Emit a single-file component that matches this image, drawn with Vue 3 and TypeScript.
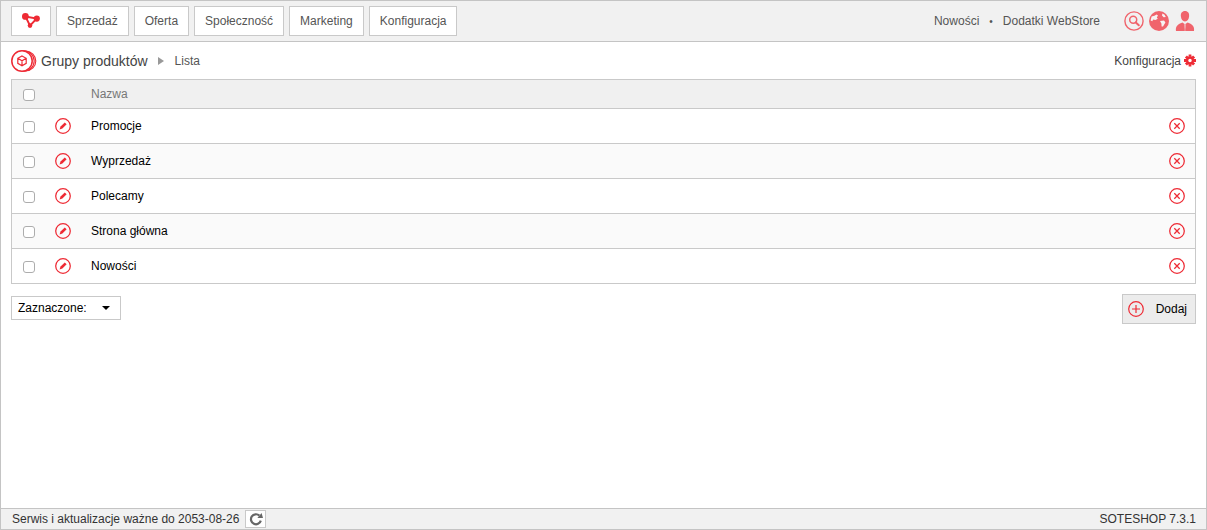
<script setup lang="ts">
const menu: string[] = ['Sprzedaż', 'Oferta', 'Społeczność', 'Marketing', 'Konfiguracja']
const rows: string[] = ['Promocje', 'Wyprzedaż', 'Polecamy', 'Strona główna', 'Nowości']
</script>

<template>
  <div class="page">
    <header class="topbar">
      <nav class="menu">
        <a class="btn logo">
          <svg width="18" height="15" viewBox="0 0 18 15">
            <path d="M3.4 3.4 L14.6 5.6 L8 12.6 Z" fill="none" stroke="#ee2a34" stroke-width="2" />
            <circle cx="3.4" cy="3.4" r="3.4" fill="#ee2a34" />
            <circle cx="14.8" cy="5.6" r="3.1" fill="#ee2a34" />
            <circle cx="8" cy="12.6" r="2.3" fill="#ee2a34" />
          </svg>
        </a>
        <a v-for="m in menu" :key="m" class="btn">{{ m }}</a>
      </nav>
      <div class="top-right">
        <span class="link">Nowości</span>
        <span class="dot">•</span>
        <span class="link">Dodatki WebStore</span>
        <span class="top-icons">
          <svg width="20" height="20" viewBox="0 0 20 20">
            <circle cx="10" cy="10" r="9.1" fill="none" stroke="#f0646c" stroke-width="1.4" />
            <circle cx="9.2" cy="8.8" r="3.5" fill="none" stroke="#f0646c" stroke-width="1.5" />
            <path d="M11.8 11.4 L14.8 14.2" stroke="#f0646c" stroke-width="2" stroke-linecap="round" />
          </svg>
          <svg width="20" height="20" viewBox="0 0 20 20">
            <circle cx="10" cy="10" r="10" fill="#f0646c" />
            <path d="M2.6 5.6 L5.4 4.8 L7.6 3.4 L9 4.6 L7.8 6.4 L8.8 7.8 L6.4 9 L4 8.6 L3.4 10.2 L1.6 9.4 Z" fill="#f7f3f3" />
            <path d="M13.4 2.4 L15.6 3.8 L16.8 6 L14.6 6.2 L13 4.6 Z M11 10 L15 9.4 L16.4 11.4 L14 15.4 L12.6 15.6 L12.4 12.6 Z" fill="#f7f3f3" />
          </svg>
          <svg class="person" width="20" height="20" viewBox="0 0 20 20">
            <path d="M10 0 C13 0 14.5 2.4 14.1 5.4 C13.8 8 12.4 10.4 10 10.4 C7.6 10.4 6.2 8 5.9 5.4 C5.5 2.4 7 0 10 0 Z" fill="#f0646c" />
            <path d="M1 20 C0.4 15.6 2 13.4 7.4 11.4 L9.6 13 L9 20 Z M19 20 C19.6 15.6 18 13.4 12.6 11.4 L10.4 13 L11 20 Z" fill="#f0646c" />
            <path d="M10 13.4 L9.2 18.4 H10.8 Z" fill="#f0646c" />
            <path d="M9.2 18.2 H10.8 V20 H9.2 Z" fill="#f0646c" />
          </svg>
        </span>
      </div>
    </header>

    <main class="content">
      <div class="crumbs">
        <div class="crumb-left">
          <svg class="crumb-icon" width="26" height="22" viewBox="0 0 26 22">
            <circle cx="15" cy="11" r="9.8" fill="none" stroke="#ee2a34" stroke-width="1.1" />
            <circle cx="13" cy="11" r="10.2" fill="#fff" stroke="#ee2a34" stroke-width="1.1" />
            <circle cx="11" cy="11" r="10.2" fill="#fff" stroke="#ee2a34" stroke-width="1.5" />
            <path d="M11 6 L15.2 8.3 V13.3 L11 15.8 L6.8 13.3 V8.3 Z M6.8 8.3 L11 10.7 L15.2 8.3 M11 10.7 V15.8" fill="none" stroke="#ee2a34" stroke-width="1.2" />
          </svg>
          <span class="title">Grupy produktów</span>
          <span class="arrow"></span>
          <span class="sub">Lista</span>
        </div>
        <div class="config">
          <span>Konfiguracja</span>
          <svg width="12" height="13" viewBox="0 0 13 14">
            <circle cx="6.5" cy="7" r="3.2" fill="none" stroke="#ee2a34" stroke-width="2.6" />
            <path d="M5 0.5 H8 V3 H5 Z M5 11 H8 V13.5 H5 Z M0 5.5 H2.5 V8.5 H0 Z M10.5 5.5 H13 V8.5 H10.5 Z M1 3.7 L3.2 1.5 L4.8 3.1 L2.6 5.3 Z M9.8 1.5 L12 3.7 L10.4 5.3 L8.2 3.1 Z M1 10.3 L2.6 8.7 L4.8 10.9 L3.2 12.5 Z M8.2 10.9 L10.4 8.7 L12 10.3 L9.8 12.5 Z" fill="#ee2a34" />
          </svg>
        </div>
      </div>

      <div class="table">
        <div class="row head">
          <span class="cell-check"><span class="check"></span></span>
          <span class="cell-edit"></span>
          <span class="cell-name">Nazwa</span>
        </div>
        <div v-for="(r, i) in rows" :key="r" class="row" :class="{ alt: i % 2 === 1 }">
          <span class="cell-check"><span class="check"></span></span>
          <span class="cell-edit">
            <svg width="16" height="16" viewBox="0 0 16 16">
              <circle cx="8" cy="8" r="7.3" fill="none" stroke="#ee2a34" stroke-width="1.25" />
              <path d="M4.6 11.4 L5.5 8.6 L9.8 4.4 L11.6 6.2 L7.4 10.5 Z" fill="#ee2a34" />
            </svg>
          </span>
          <span class="cell-name">{{ r }}</span>
          <span class="cell-del">
            <svg width="16" height="16" viewBox="0 0 16 16">
              <circle cx="8" cy="8" r="7.3" fill="none" stroke="#ee2a34" stroke-width="1.25" />
              <path d="M5.3 5.3 L10.7 10.7 M10.7 5.3 L5.3 10.7" stroke="#ee2a34" stroke-width="1.25" />
            </svg>
          </span>
        </div>
      </div>

      <div class="actions">
        <div class="select">
          <span>Zaznaczone:</span>
          <span class="caret"></span>
        </div>
        <a class="add">
          <svg width="16" height="16" viewBox="0 0 16 16">
            <circle cx="8" cy="8" r="7.3" fill="none" stroke="#ee2a34" stroke-width="1.2" />
            <path d="M8 4 V12 M4 8 H12" stroke="#ee2a34" stroke-width="1.2" />
          </svg>
          <span>Dodaj</span>
        </a>
      </div>
    </main>

    <footer class="footer">
      <div class="foot-left">
        <span>Serwis i aktualizacje ważne do 2053-08-26</span>
        <span class="refresh">
          <svg width="14" height="14" viewBox="0 0 14 14">
            <path d="M11.8 8.6 A5 5 0 1 1 10.4 3.6" fill="none" stroke="#666" stroke-width="2.2" />
            <path d="M8.4 6 H14 L12.6 1 Z" fill="#666" />
          </svg>
        </span>
      </div>
      <span>SOTESHOP 7.3.1</span>
    </footer>
  </div>
</template>

<style scoped>
.page {
  box-sizing: border-box;
  width: 1207px;
  height: 530px;
  display: flex;
  flex-direction: column;
  border: 1px solid #c4c4c4;
  border-bottom: 0;
  font-family: "Liberation Sans", Arial, sans-serif;
  font-size: 12px;
  color: #000;
  background: #fff;
  overflow: hidden;
}
.topbar {
  box-sizing: border-box;
  flex: none;
  height: 41px;
  display: flex;
  align-items: center;
  justify-content: space-between;
  padding: 0 10px;
  background: #f1f1f1;
  border-bottom: 1px solid #c4c4c4;
}
.menu {
  display: flex;
  gap: 5px;
  margin-top: -1px;
}
.btn {
  box-sizing: border-box;
  height: 30px;
  display: flex;
  align-items: center;
  padding: 0 10px;
  background: #fff;
  border: 1px solid #c9c9c9;
  color: #555;
}
.btn:last-child {
  padding-right: 9px;
}
.logo {
  width: 40px;
  justify-content: center;
  padding: 0;
}
.top-right {
  display: flex;
  align-items: center;
  color: #555;
}
.dot {
  margin: 0 10px;
  font-size: 10px;
}
.top-icons {
  display: flex;
  align-items: center;
  gap: 5px;
  margin-left: 24px;
  margin-right: 1px;
}
.person {
  margin-left: 1px;
}
.content {
  flex: 1;
  padding: 0 10px;
  min-height: 0;
}
.crumbs {
  height: 37px;
  display: flex;
  align-items: center;
  justify-content: space-between;
}
.crumb-left {
  display: flex;
  align-items: center;
}
.crumb-icon {
  margin-right: 4px;
}
.title {
  font-size: 14px;
  color: #444;
}
.arrow {
  width: 0;
  height: 0;
  margin: 1px 11px 0 10px;
  border-left: 6px solid #999;
  border-top: 4px solid transparent;
  border-bottom: 4px solid transparent;
}
.sub {
  color: #555;
}
.config {
  display: flex;
  align-items: center;
  gap: 3px;
  color: #444;
}
.table {
  border: 1px solid #c9c9c9;
}
.row {
  box-sizing: border-box;
  height: 35px;
  display: flex;
  align-items: center;
  border-top: 1px solid #c9c9c9;
}
.row.head {
  height: 28px;
  border-top: 0;
  background: #f0f0f0;
  color: #777;
}
.row.alt {
  background: #fafafa;
}
.cell-check {
  box-sizing: border-box;
  width: 36px;
  padding-left: 11px;
  display: flex;
}
.check {
  box-sizing: border-box;
  width: 12px;
  height: 12px;
  margin-top: 2px;
  background: #fff;
  border: 1px solid #adadad;
  border-radius: 3px;
}
.cell-edit {
  width: 43px;
  height: 16px;
  display: flex;
  padding-left: 7px;
  box-sizing: border-box;
}
.cell-name {
  flex: 1;
}
.cell-del {
  height: 16px;
  padding-right: 10px;
}
.actions {
  display: flex;
  justify-content: space-between;
  align-items: flex-start;
  margin-top: 10px;
}
.select {
  box-sizing: border-box;
  width: 110px;
  height: 24px;
  margin-top: 2px;
  display: flex;
  align-items: center;
  justify-content: space-between;
  padding: 0 10px 0 6px;
  border: 1px solid #c9c9c9;
}
.caret {
  width: 0;
  height: 0;
  border-top: 4px solid #000;
  border-left: 4px solid transparent;
  border-right: 4px solid transparent;
}
.add {
  box-sizing: border-box;
  width: 74px;
  height: 30px;
  display: flex;
  align-items: center;
  justify-content: space-between;
  padding: 0 8px 0 5px;
  background: #ececec;
  border: 1px solid #c9c9c9;
}
.footer {
  box-sizing: border-box;
  flex: none;
  height: 22px;
  display: flex;
  align-items: center;
  justify-content: space-between;
  padding: 0 10px 0 11px;
  background: #f1f1f1;
  border-top: 1px solid #c4c4c4;
  border-bottom: 1px solid #c4c4c4;
  color: #333;
}
.foot-left {
  display: flex;
  align-items: center;
  gap: 6px;
}
.refresh {
  box-sizing: border-box;
  width: 21px;
  height: 18px;
  display: flex;
  align-items: center;
  justify-content: center;
  background: #fff;
  border: 1px solid #c9c9c9;
}
</style>
